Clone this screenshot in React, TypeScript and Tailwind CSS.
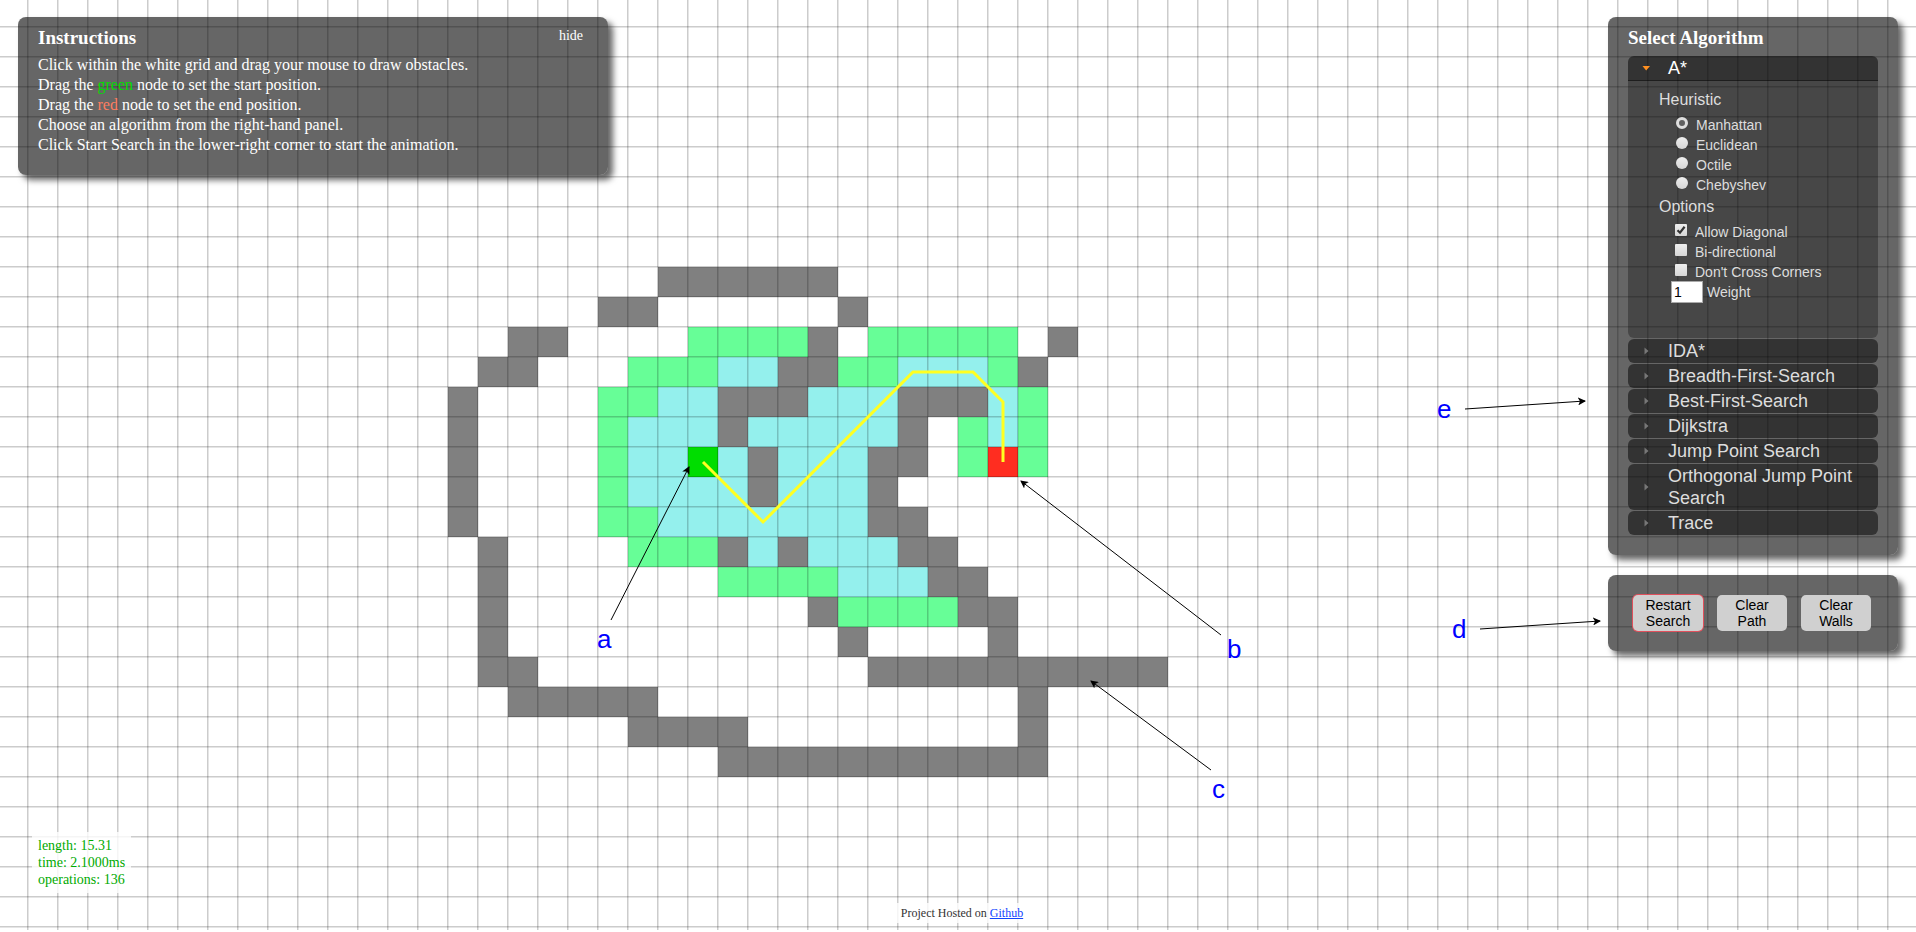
import { useState, type ReactNode } from "react";

type Kind = "wall" | "opened" | "closed" | "start" | "end";
type Run = [row: number, from: number, to: number, kind: Kind];

const CELL = 30;
const ORIGIN_X = 28;
const ORIGIN_Y = 27;

const fills: Record<Kind, string> = {
  wall: "#808080",
  opened: "#67fe97",
  closed: "#94f0ed",
  start: "#00dd00",
  end: "#ff2d20",
};

const runs: Run[] = [
  [8, 21, 26, "wall"],
  [9, 19, 20, "wall"], [9, 27, 27, "wall"],
  [10, 16, 17, "wall"], [10, 22, 25, "opened"], [10, 26, 26, "wall"], [10, 28, 32, "opened"], [10, 34, 34, "wall"],
  [11, 15, 16, "wall"], [11, 20, 22, "opened"], [11, 23, 24, "closed"], [11, 25, 26, "wall"],
  [11, 27, 28, "opened"], [11, 29, 31, "closed"], [11, 32, 32, "opened"], [11, 33, 33, "wall"],
  [12, 14, 14, "wall"], [12, 19, 20, "opened"], [12, 21, 22, "closed"], [12, 23, 25, "wall"],
  [12, 26, 28, "closed"], [12, 29, 31, "wall"], [12, 32, 32, "closed"], [12, 33, 33, "opened"],
  [13, 14, 14, "wall"], [13, 19, 19, "opened"], [13, 20, 22, "closed"], [13, 23, 23, "wall"],
  [13, 24, 28, "closed"], [13, 29, 29, "wall"], [13, 31, 31, "opened"], [13, 32, 32, "closed"], [13, 33, 33, "opened"],
  [14, 14, 14, "wall"], [14, 19, 19, "opened"], [14, 20, 21, "closed"], [14, 22, 22, "start"],
  [14, 23, 23, "closed"], [14, 24, 24, "wall"], [14, 25, 27, "closed"], [14, 28, 29, "wall"],
  [14, 31, 31, "opened"], [14, 32, 32, "end"], [14, 33, 33, "opened"],
  [15, 14, 14, "wall"], [15, 19, 19, "opened"], [15, 20, 23, "closed"], [15, 24, 24, "wall"],
  [15, 25, 27, "closed"], [15, 28, 28, "wall"],
  [16, 14, 14, "wall"], [16, 19, 20, "opened"], [16, 21, 27, "closed"], [16, 28, 29, "wall"],
  [17, 15, 15, "wall"], [17, 20, 22, "opened"], [17, 23, 23, "wall"], [17, 24, 24, "closed"],
  [17, 25, 25, "wall"], [17, 26, 28, "closed"], [17, 29, 30, "wall"],
  [18, 15, 15, "wall"], [18, 23, 26, "opened"], [18, 27, 29, "closed"], [18, 30, 31, "wall"],
  [19, 15, 15, "wall"], [19, 26, 26, "wall"], [19, 27, 30, "opened"], [19, 31, 32, "wall"],
  [20, 15, 15, "wall"], [20, 27, 27, "wall"], [20, 32, 32, "wall"],
  [21, 15, 16, "wall"], [21, 28, 37, "wall"],
  [22, 16, 20, "wall"], [22, 33, 33, "wall"],
  [23, 20, 23, "wall"], [23, 33, 33, "wall"],
  [24, 23, 33, "wall"],
];

const path: [number, number][] = [[22, 14], [24, 16], [29, 11], [31, 11], [32, 12], [32, 14]];

const arrows = [
  { id: "a", from: [611, 620], to: [689, 467], label: [597, 648] },
  { id: "b", from: [1221, 635], to: [1021, 481], label: [1227, 658] },
  { id: "c", from: [1211, 770], to: [1091, 681], label: [1212, 798] },
  { id: "d", from: [1480, 629], to: [1600, 621], label: [1452, 638] },
  { id: "e", from: [1465, 409], to: [1585, 401], label: [1437, 418] },
];

function Board() {
  return (
    <svg className="absolute inset-0 h-full w-full" aria-label="Search grid">
      <defs>
        <pattern id="grid" x="27" y="26" width={CELL} height={CELL} patternUnits="userSpaceOnUse">
          <rect x="0" y="0" width="1" height={CELL} fill="#000" fillOpacity="0.2" />
          <rect x="1" y="0" width="1" height={CELL} fill="#000" fillOpacity="0.1" />
          <rect x="0" y="0" width={CELL} height="1" fill="#000" fillOpacity="0.2" />
          <rect x="0" y="1" width={CELL} height="1" fill="#000" fillOpacity="0.1" />
        </pattern>
        <marker id="head" viewBox="0 0 8 8" refX="7" refY="4" markerWidth="8" markerHeight="8" orient="auto" markerUnits="userSpaceOnUse">
          <path d="M0 0 L8 4 L0 8 L2 4 Z" fill="#000" />
        </marker>
      </defs>
      {runs.map(([row, from, to, kind]) => (
        <rect
          key={`${row}-${from}`}
          x={ORIGIN_X + from * CELL}
          y={ORIGIN_Y + row * CELL}
          width={(to - from + 1) * CELL}
          height={CELL}
          fill={fills[kind]}
        />
      ))}
      <rect width="100%" height="930" fill="url(#grid)" />
      <polyline
        points={path.map(([c, r]) => `${ORIGIN_X + c * CELL + 15},${ORIGIN_Y + r * CELL + 15}`).join(" ")}
        fill="none"
        stroke="#ffff20"
        strokeWidth="3"
      />
      {arrows.map(({ id, from, to, label }) => (
        <g key={id}>
          <line x1={from[0]} y1={from[1]} x2={to[0]} y2={to[1]} stroke="#000" strokeWidth="1" markerEnd="url(#head)" />
          <text x={label[0]} y={label[1]} fill="#0000ff" className="font-['Liberation_Sans',sans-serif] text-[26px]">
            {id}
          </text>
        </g>
      ))}
    </svg>
  );
}

function Panel({ className, children }: { className: string; children: ReactNode }) {
  return (
    <section className={`rounded-lg bg-black/60 text-white shadow-[5px_5px_6px_rgba(0,0,0,0.6)] ${className}`}>
      {children}
    </section>
  );
}

const heuristics = ["Manhattan", "Euclidean", "Octile", "Chebyshev"];
const options = ["Allow Diagonal", "Bi-directional", "Don't Cross Corners"];
const algorithms = [
  "IDA*",
  "Breadth-First-Search",
  "Best-First-Search",
  "Dijkstra",
  "Jump Point Search",
  "Orthogonal Jump Point Search",
  "Trace",
];

function AlgorithmOptions() {
  const [heuristic, setHeuristic] = useState("Manhattan");
  return (
    <div className="h-[257px] rounded-b-md bg-black/30 pl-[31px] pt-[7px] text-sm leading-5 text-[#dddddd]">
      <fieldset>
        <legend className="h-[27px] text-base leading-6">Heuristic</legend>
        {heuristics.map((name) => (
          <label key={name} className="flex h-5 items-center pl-[17px]">
            <input
              type="radio"
              name="heuristic"
              checked={heuristic === name}
              onChange={() => setHeuristic(name)}
              className="mb-1 mr-2 size-3 appearance-none rounded-full bg-linear-to-b from-[#eeeeee] to-[#d6d6d6] checked:border-[3px] checked:border-[#dedede] checked:bg-none checked:bg-[#606060]"
            />
            {name}
          </label>
        ))}
      </fieldset>
      <fieldset>
        <legend className="h-[27px] text-base leading-6">Options</legend>
        {options.map((name) => (
          <label key={name} className="flex h-5 items-center pl-4">
            <span className="relative mb-1 mr-2 flex size-3">
              <input
                type="checkbox"
                defaultChecked={name === "Allow Diagonal"}
                className="peer size-3 appearance-none rounded-[1px] bg-linear-to-b from-[#eeeeee] to-[#d6d6d6]"
              />
              <svg viewBox="0 0 12 12" className="pointer-events-none absolute inset-0 hidden size-3 peer-checked:block">
                <path d="M2.5 6.2 L5 8.7 L9.6 2.8" fill="none" stroke="#333" strokeWidth="2.2" />
              </svg>
            </span>
            {name}
          </label>
        ))}
      </fieldset>
      <label className="flex h-5 items-center gap-1 pl-3">
        <input
          type="text"
          defaultValue="1"
          className="h-[22px] w-8 border border-[#aaaaaa] bg-white px-0.5 text-sm text-black"
        />
        Weight
      </label>
    </div>
  );
}

function Header({ name, open }: { name: string; open?: boolean }) {
  return (
    <button
      type="button"
      aria-expanded={!!open}
      className={`flex w-full items-center bg-black/50 py-px pl-[14px] pr-3 text-left text-lg leading-[22px] ${
        open ? "rounded-t-md border-b border-black/40 text-white" : "rounded-md text-[#dddddd]"
      }`}
    >
      <svg viewBox="0 0 8 8" className="mr-[18px] size-2 shrink-0">
        {open ? <path d="M0.5 2 H8 L4.2 6.5 Z" fill="#ff9020" /> : <path d="M2.5 0.5 V7.5 L6.5 4 Z" fill="#777" />}
      </svg>
      <span>{name}</span>
    </button>
  );
}

const actions = ["Restart Search", "Clear Path", "Clear Walls"];

export default function App() {
  const [showHelp, setShowHelp] = useState(true);
  return (
    <div className="relative flex min-h-screen flex-col justify-between overflow-hidden bg-white font-['Liberation_Serif',serif]">
      <Board />
      <main className="relative flex items-start justify-between px-[18px] pt-[17px]">
        <Panel className="w-[590px] px-5 pb-5 pt-2">
          <div className="flex items-start justify-between pr-[5px]">
            <h1 className="text-[19px] font-bold leading-[26px]">Instructions</h1>
            <button type="button" className="pt-px text-sm leading-5" onClick={() => setShowHelp(!showHelp)}>
              hide
            </button>
          </div>
          {showHelp && (
            <div className="pt-1 text-base leading-5">
              <p>Click within the white grid and drag your mouse to draw obstacles.</p>
              <p>
                Drag the <span className="text-[#00dd00]">green</span> node to set the start position.
              </p>
              <p>
                Drag the <span className="text-[#ff7d60]">red</span> node to set the end position.
              </p>
              <p>Choose an algorithm from the right-hand panel.</p>
              <p>Click Start Search in the lower-right corner to start the animation.</p>
            </div>
          )}
        </Panel>
        <div className="flex w-[290px] flex-col gap-5">
          <Panel className="px-5 pb-5 pt-2">
            <h2 className="h-[31px] text-[19px] font-bold leading-[26px]">Select Algorithm</h2>
            <div className="flex flex-col gap-px font-['Liberation_Sans',sans-serif]">
              <div>
                <Header name="A*" open />
                <AlgorithmOptions />
              </div>
              {algorithms.map((name) => (
                <Header key={name} name={name} />
              ))}
            </div>
          </Panel>
          <Panel className="flex gap-3.5 py-5 pl-[25px]">
            {actions.map((name, i) => (
              <button
                key={name}
                type="button"
                className={`h-9 w-[70px] rounded-[5px] bg-[#d0d0d0] px-2 font-['Liberation_Sans',sans-serif] text-sm leading-4 text-black ${
                  i === 0 ? "ring-1 ring-[#e0505c]" : ""
                }`}
              >
                {name}
              </button>
            ))}
          </Panel>
        </div>
      </main>
      <footer className="relative grid grid-cols-[1fr_auto_1fr] items-end pb-[9px]">
        <div className="mb-[30px] ml-8 w-fit bg-white/80 px-1.5 py-[5px] text-sm leading-[17px] text-[#00aa00]">
          <p>length: 15.31</p>
          <p>time: 2.1000ms</p>
          <p>operations: 136</p>
        </div>
        <p className="ml-2 bg-white/80 px-1 text-xs leading-5 text-[#333333]">
          Project Hosted on{" "}
          <a href="https://github.com" className="text-[#1144ff] underline">
            Github
          </a>
        </p>
      </footer>
    </div>
  );
}
